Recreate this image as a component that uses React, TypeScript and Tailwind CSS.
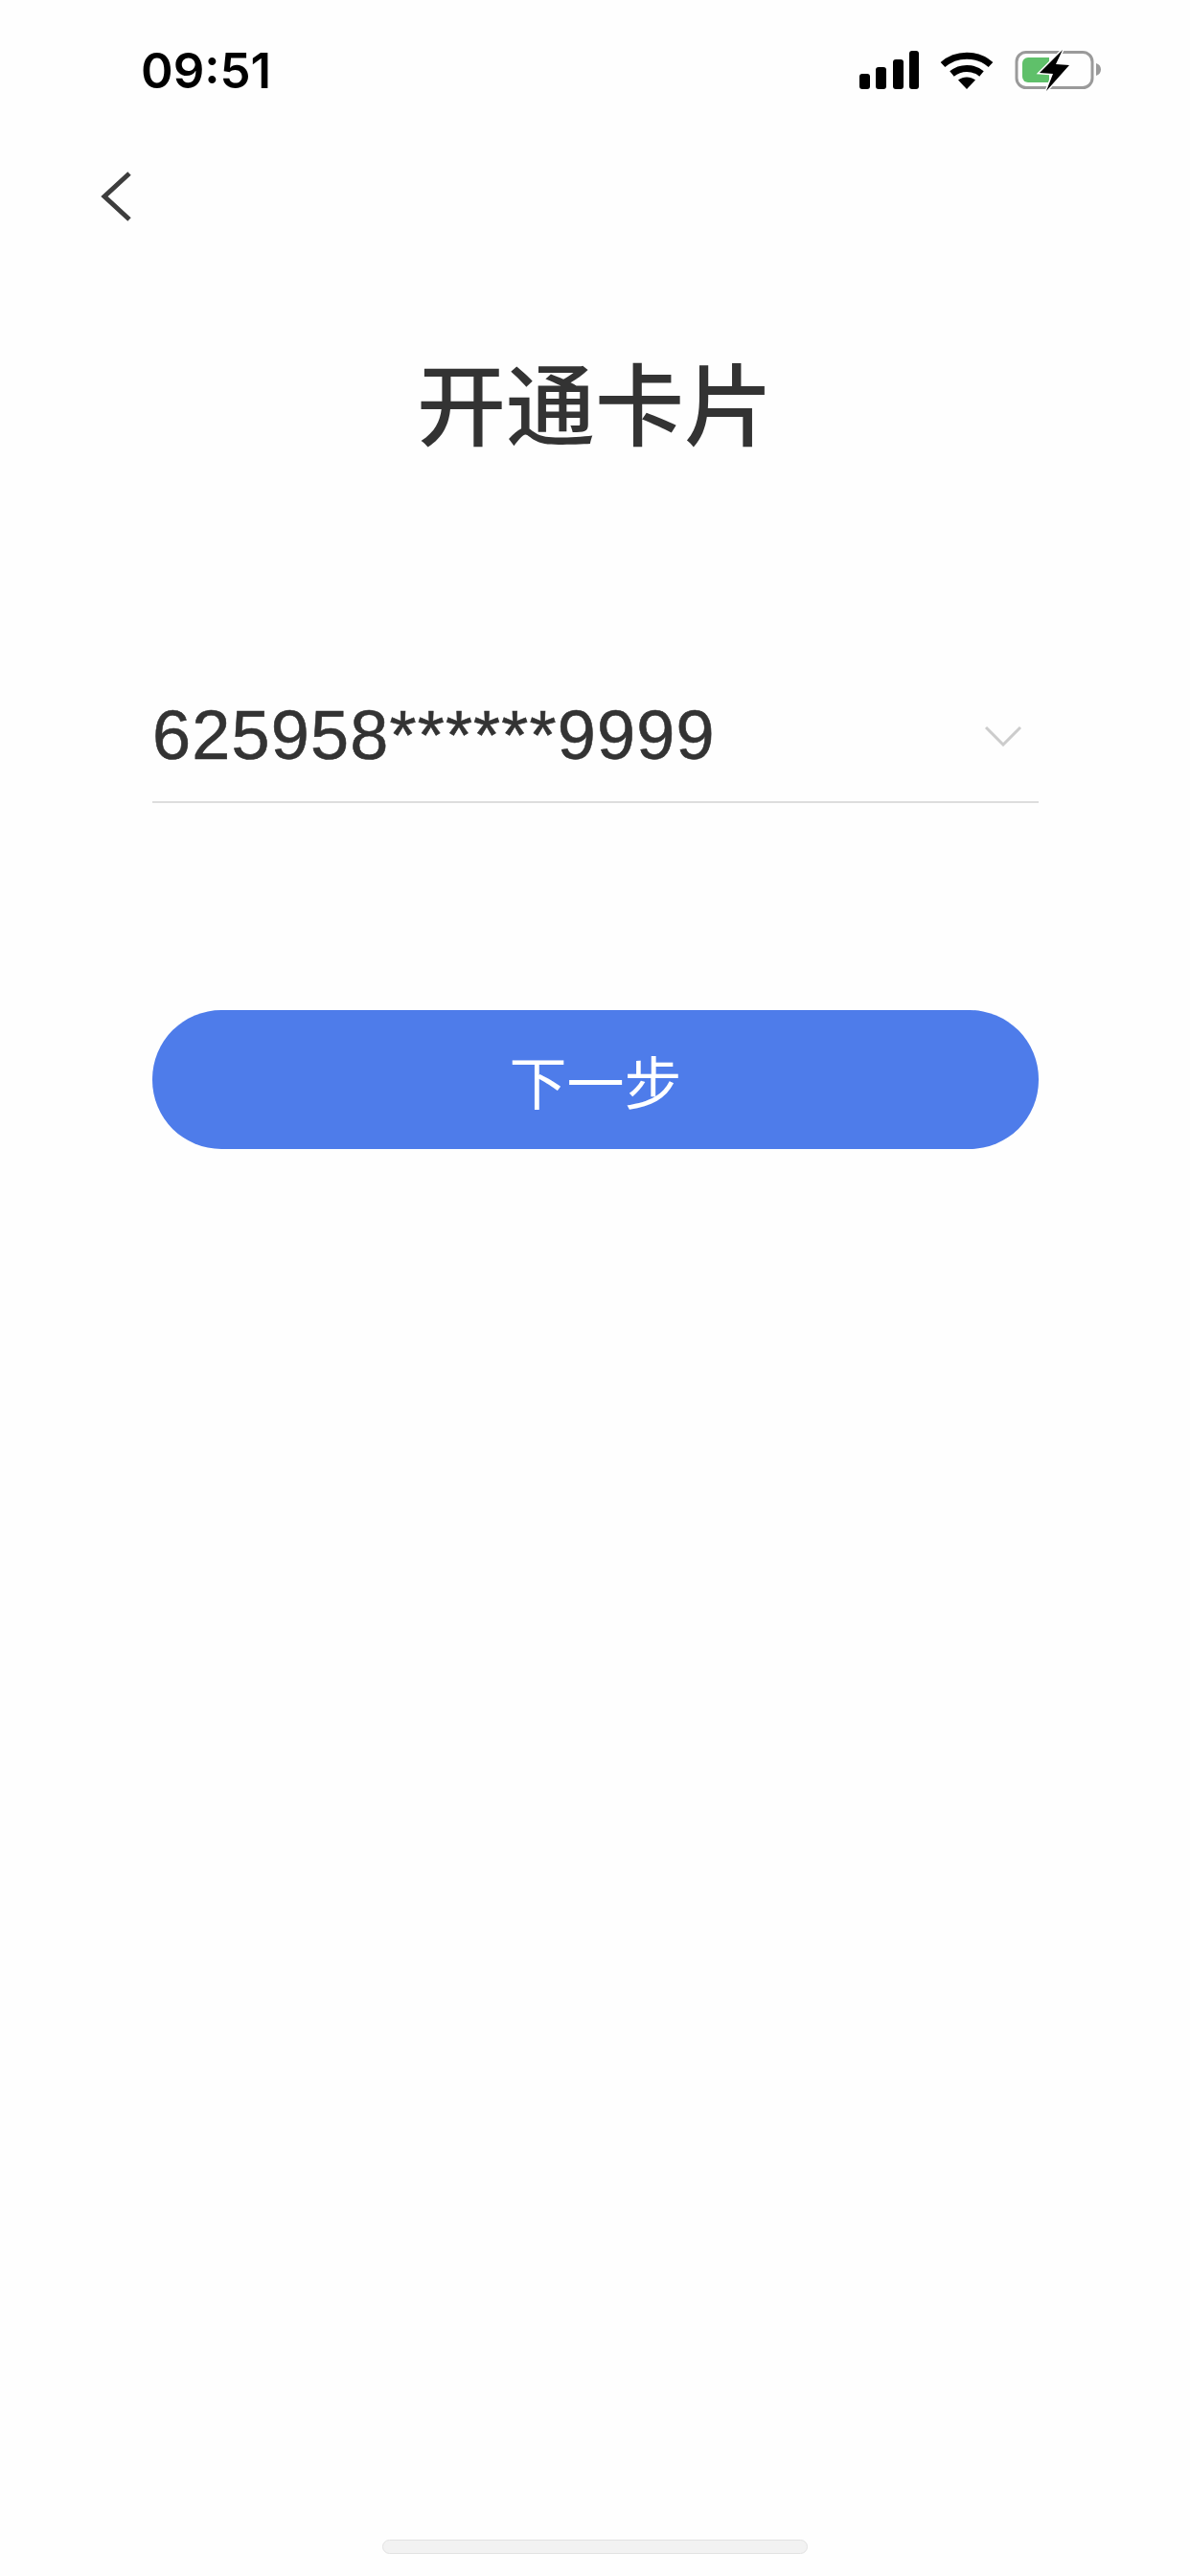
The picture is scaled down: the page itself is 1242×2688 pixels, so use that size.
import React from 'react';

const SignalIcon = () => (
  <svg width="62" height="40" viewBox="0 0 62 40" fill="#000">
    <rect x="0" y="24" width="11" height="16" rx="3" />
    <rect x="17" y="17" width="11" height="23" rx="3" />
    <rect x="35" y="9" width="11" height="31" rx="3" />
    <rect x="52" y="0" width="10" height="40" rx="3" />
  </svg>
);

const WifiIcon = () => (
  <svg width="56" height="40" viewBox="0 0 56 40" fill="none" stroke="#000" strokeWidth="7">
    <path d="M3 14.5C17 2 39 2 53 14.5" />
    <path d="M12.5 24C21.5 16.5 34.5 16.5 43.5 24" />
    <path d="M19 30.5C24.5 26.5 31.5 26.5 37 30.5L28 40Z" fill="#000" stroke="none" />
  </svg>
);

const BatteryIcon = () => (
  <svg className="overflow-visible" width="92" height="40" viewBox="0 0 92 40" fill="none">
    <rect x="2" y="1.500" width="79" height="37" rx="10" stroke="#9a9a9a" strokeWidth="3" />
    <path d="M8 13a6 6 0 0 1 6-6h22v26H14a6 6 0 0 1-6-6Z" fill="#5fc06a" />
    <path d="M85 13c3 1 5 3 5 6.500s-2 5.500-5 6.500Z" fill="#9a9a9a" />
    <path d="M50 -1L26 23L40 24L33 42L57 15L43 14Z" fill="#000" stroke="#fefefe" strokeWidth="3" paintOrder="stroke" />
  </svg>
);

const StatusBar = () => (
  <div className="flex items-start justify-between pl-[147px] pr-[91px] pt-[53px]">
    <span className="text-[51px] leading-[42px] font-semibold text-black font-['Inter',sans-serif]">09:51</span>
    <div className="flex items-center">
      <SignalIcon />
      <div className="ml-[22px]">
        <WifiIcon />
      </div>
      <div className="ml-[22px]">
        <BatteryIcon />
      </div>
    </div>
  </div>
);

export default function App() {
  return (
    <div className="flex flex-col h-[2688px] bg-[#fefefe] font-['Liberation_Sans','Noto_Sans_CJK_SC',sans-serif] text-[#333333]">
      <StatusBar />

      {/* Back */}
      <div className="pl-[105px] pt-[84px]">
        <svg width="32" height="52" viewBox="0 0 32 52" fill="none" stroke="#3d3d3d" strokeWidth="5">
          <path d="M30 2L4 26L30 50" />
        </svg>
      </div>

      <h1 className="mt-[132px] text-center text-[93px] leading-[110px] font-medium font-['Noto_Sans_CJK_SC',sans-serif]">
        开通卡片
      </h1>

      <div className="pl-[159px] pr-[158px] mt-[227px]">
        {/* Card select */}
        <div className="flex items-center justify-between h-[138px] border-b-2 border-[#dddddd]">
          <span className="mb-[3px] text-[72px] leading-[84px] tracking-[1.2px] [-webkit-text-stroke:0.6px_#333333]">625958******9999</span>
          <svg className="mr-[18px]" width="38" height="22" viewBox="0 0 38 22" fill="none" stroke="#cccccc" strokeWidth="3">
            <path d="M1 2L19 20L37 2" />
          </svg>
        </div>

        <button className="mt-[216px] flex items-center justify-center w-full h-[145px] rounded-[72px] bg-[#4e7cea] text-white text-[60px] font-['Noto_Sans_CJK_SC',sans-serif] font-normal">
          下一步
        </button>
      </div>

      <div className="mt-auto mb-[23px] mx-auto w-[444px] h-[15px] rounded-full bg-[#f2f2f2] border border-[#e2e2e2]" />
    </div>
  );
}
